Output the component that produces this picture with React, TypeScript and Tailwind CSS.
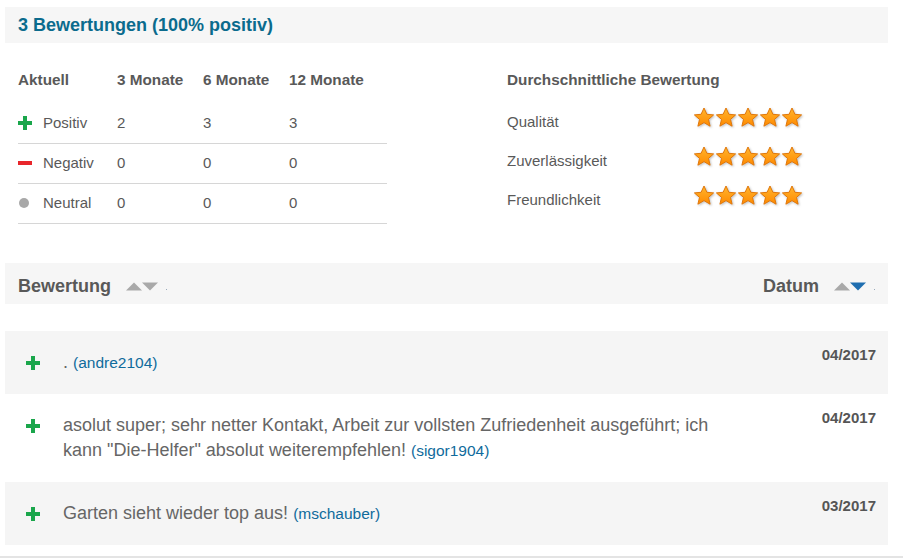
import React from "react";

type Review = {
  text: string;
  user: string;
  date: string;
  shaded: boolean;
};

const REVIEWS: Review[] = [
  { text: ".", user: "andre2104", date: "04/2017", shaded: true },
  {
    text: 'asolut super; sehr netter Kontakt, Arbeit zur vollsten Zufriedenheit ausgeführt; ich kann "Die-Helfer" absolut weiterempfehlen!',
    user: "sigor1904",
    date: "04/2017",
    shaded: false,
  },
  { text: "Garten sieht wieder top aus!", user: "mschauber", date: "03/2017", shaded: true },
];

const STATS = [
  { kind: "plus", label: "Positiv", values: ["2", "3", "3"] },
  { kind: "minus", label: "Negativ", values: ["0", "0", "0"] },
  { kind: "dot", label: "Neutral", values: ["0", "0", "0"] },
];

function Plus({ size = 14 }: { size?: number }) {
  return (
    <svg width={size} height={size} viewBox="0 0 14 14" className="shrink-0">
      <rect x="5" y="0" width="4" height="14" fill="#1aa64b" />
      <rect x="0" y="5" width="14" height="4" fill="#1aa64b" />
    </svg>
  );
}

function Minus() {
  return (
    <svg width={14} height={14} viewBox="0 0 14 14" className="shrink-0">
      <rect x="0" y="5" width="14" height="4" fill="#e8262b" />
    </svg>
  );
}

function Dot() {
  return (
    <svg width={14} height={14} viewBox="0 0 14 14" className="shrink-0">
      <circle cx="6" cy="7" r="5" fill="#a8a8a8" />
    </svg>
  );
}

function Star() {
  return (
    <svg width={22} height={21} viewBox="0 0 22 21" className="shrink-0 drop-shadow-[1px_1px_1px_rgba(0,0,0,0.25)]">
      <defs>
        <linearGradient id="starFill" x1="0" y1="0" x2="0" y2="1">
          <stop offset="0" stopColor="#ffb52e" />
          <stop offset="1" stopColor="#ff8a00" />
        </linearGradient>
      </defs>
      <polygon
        points="11,1 13.9,7.3 20.6,7.9 15.5,12.4 17.1,19.2 11,15.6 4.9,19.2 6.5,12.4 1.4,7.9 8.1,7.3"
        fill="url(#starFill)"
        stroke="#e0770a"
        strokeWidth="1"
        strokeLinejoin="round"
      />
    </svg>
  );
}

function SortArrows({ active }: { active?: boolean }) {
  return (
    <span className="ml-[15px] flex items-end">
      <svg width={34} height={9} viewBox="0 0 34 9">
        <polygon points="0,8.5 8,0.5 16,8.5" fill="#a9a9a9" />
        <polygon points="16,0.5 32,0.5 24,8.5" fill={active ? "#1f6eb0" : "#a9a9a9"} />
      </svg>
      <span className="ml-[6px] mb-[1px] h-[1px] w-[1px] bg-[#9ab]" />
    </span>
  );
}

export default function App() {
  return (
    <div className="min-h-[559px] w-[903px] bg-white font-['Liberation_Sans',Arial,sans-serif] text-[#595959]">
      <div className="pl-[5px] pt-[7px]">
        <div className="flex h-[36px] w-[883px] items-center bg-[#f6f6f6] pl-[13px]">
          <h2 className="text-[18px] font-bold text-[#0b6b8d]">3 Bewertungen (100% positiv)</h2>
        </div>

        <div className="ml-[13px] mt-[17px] flex text-[15px]">
          <div className="w-[369px]">
            <div className="grid h-[44px] grid-cols-[99px_86px_86px_98px] pt-[10px] text-[15.3px] font-bold leading-[20px]">
              <span>Aktuell</span>
              <span>3 Monate</span>
              <span>6 Monate</span>
              <span>12 Monate</span>
            </div>
            {STATS.map((row) => (
              <div
                key={row.label}
                className="grid h-[40px] grid-cols-[99px_86px_86px_98px] items-center border-b border-[#d6d6d6] pb-[1px]"
              >
                <span className="flex items-center gap-[11px]">
                  {row.kind === "plus" ? <Plus /> : row.kind === "minus" ? <Minus /> : <Dot />}
                  {row.label}
                </span>
                {row.values.map((v, i) => (
                  <span key={i}>{v}</span>
                ))}
              </div>
            ))}
          </div>

          <div className="ml-[120px]">
            <div className="h-[42px] pt-[10px] text-[15.3px] font-bold leading-[20px]">Durchschnittliche Bewertung</div>
            {["Qualität", "Zuverlässigkeit", "Freundlichkeit"].map((label) => (
              <div key={label} className="flex h-[39px] items-center pt-[1px]">
                <span className="w-[186px]">{label}</span>
                <span className="-mt-[10px] flex">
                  {Array.from({ length: 5 }, (_, i) => (
                    <Star key={i} />
                  ))}
                </span>
              </div>
            ))}
          </div>
        </div>

        <div className="mt-[39px] flex h-[41px] w-[883px] items-center bg-[#f6f6f6] pl-[13px] pr-[13px] pt-[5px] text-[18px] font-bold">
          <span>Bewertung</span>
          <SortArrows />
          <span className="ml-auto">Datum</span>
          <SortArrows active />
        </div>

        <div className="mt-[27px] w-[883px]">
          {REVIEWS.map((r, i) => (
            <div
              key={i}
              className={`flex items-start pb-[19px] pl-[21px] pr-[12px] pt-[14px] ${r.shaded ? "bg-[#f5f5f5]" : "bg-white"}`}
            >
              <span className="mt-[11px]">
                <Plus />
              </span>
              <p className="ml-[23px] mt-[5px] w-[660px] text-[18px] leading-[25px] text-[#666]">
                {r.text}{" "}
                <span className="text-[15.5px] text-[#0f6b9c]">({r.user})</span>
              </p>
              <span className="ml-auto text-[15px] font-bold leading-[20px] text-[#555]">{r.date}</span>
            </div>
          ))}
        </div>
      </div>
      <div className="mt-[11px] h-[2px] w-full bg-[#e4e4e4]" />
    </div>
  );
}
